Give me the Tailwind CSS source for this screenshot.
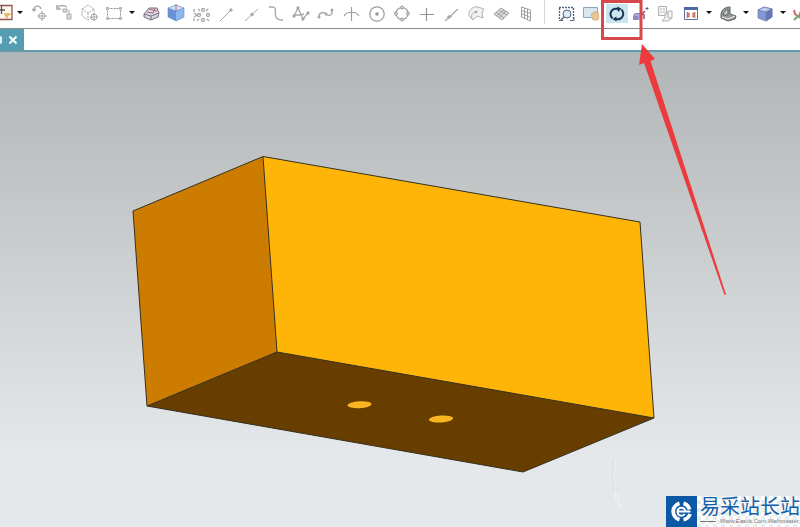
<!DOCTYPE html>
<html lang="zh">
<head>
<meta charset="utf-8">
<title>CAD</title>
<script src="https://cdn.jsdelivr.net/npm/@tailwindcss/browser@4"></script>
</head>
<body class="relative flex h-screen flex-col overflow-hidden bg-white font-['Liberation_Sans','Noto_Sans_CJK_SC',sans-serif]">
<svg class="hidden"><defs>
  <symbol id="caret" viewBox="0 0 12 24"><path d="M3 11h6l-3 3z" fill="#111"/></symbol>
</defs></svg>

<header class="flex h-[29px] shrink-0 items-center overflow-hidden border-b border-[#8c8c8e] pb-1 text-[#a8a8aa]">
  <button aria-label="Selection filter" class="-ml-[9px] flex w-[23px] shrink-0 justify-center"><svg class="h-6 w-6 shrink-0" viewBox="0 0 24 24" fill="none"><path d="M4 5.500h17v14H4z" fill="#fff6ee" stroke="#915452" stroke-width="1.300"/><path d="M7 10h7M10.500 6v8" stroke="#555" stroke-width="1.300"/><path d="M13 14h6l-3 2v3" fill="#e9b95b" stroke="#e4b466" stroke-width="1.500"/></svg></button>
  <button aria-label="Filter options" class="w-3 shrink-0"><svg class="h-6 w-3" viewBox="0 0 12 24"><use href="#caret"/></svg></button>
  <button aria-label="Move point" class="flex w-[25px] shrink-0 justify-center"><svg class="h-6 w-6" viewBox="0 0 24 24" fill="none" stroke="currentColor"><path d="M7 11C6 5 13 5 14 9M5 9l2 2 2-2" stroke-width="1.300"/><circle cx="15" cy="16" r="3"/><path d="M10 16h10M15 11v10"/></svg></button>
  <button aria-label="Reorder" class="flex w-[25px] shrink-0 justify-center"><svg class="h-6 w-6" viewBox="0 0 24 24" fill="none" stroke="currentColor"><path d="M5 8c3-3 7-3 10-1M5 5v4h4" stroke-width="1.500"/><path d="M11 9h4v3h-4zM15 14h4v5h-4zM17 10v4" fill="#ddd"/></svg></button>
  <button aria-label="Select body" class="flex w-[25px] shrink-0 justify-center"><svg class="h-6 w-6" viewBox="0 0 24 24" fill="none" stroke="currentColor"><path d="M5 9l6-4 6 4v7l-6 4-6-4zM5 9l6 4 6-4M11 13v7" stroke-dasharray="2 1"/><circle cx="17" cy="17" r="3" fill="#fff"/><path d="M13 17h8M17 13v8"/></svg></button>
  <button aria-label="Rectangle select" class="flex w-[25px] shrink-0 justify-center"><svg class="h-6 w-6" viewBox="0 0 24 24" fill="none" stroke="#8c8c8e"><path d="M5.500 8.500h13v10h-13z" stroke-dasharray="2 1"/><path d="M4 7h3v3H4zM17 7h3v3h-3zM4 17h3v3H4zM17 17h3v3h-3z" fill="#bbb" stroke="none"/></svg></button>
  <button aria-label="Rectangle select options" class="w-3 shrink-0"><svg class="h-6 w-3" viewBox="0 0 12 24"><use href="#caret"/></svg></button>
  <button aria-label="Highlight body" class="flex w-[25px] shrink-0 justify-center"><svg class="h-6 w-6" viewBox="0 0 24 24" stroke="#74717c"><path d="M5 14l5-6h8l2 5-1 4-7 3-7-3z" fill="#d8d8e2"/><path d="M5 14l7 2 8-3M12 16v4" fill="none"/><path d="M8 12l6 1 2-5M10 9l8 2" fill="none" stroke="#b36577"/></svg></button>
  <button aria-label="Solid body" class="flex w-[25px] shrink-0 justify-center"><svg class="h-6 w-6" viewBox="0 0 24 24"><path d="M4 8l8-3 8 3v9l-8 4-8-4z" fill="#6892d8"/><path d="M4 8l8-3 8 3-8 3z" fill="#cfe3f8"/><path d="M12 11l8-3v9l-8 4z" fill="#8db6ec"/><path d="M4 8l8 3 8-3M4 8v9l8 4 8-4V8l-8-3z" stroke="#6f8fc8" stroke-width=".6" fill="none"/><path d="M12 4v7" stroke="#b76b75"/></svg></button>
  <button aria-label="Snap point" class="flex w-[25px] shrink-0 justify-center"><svg class="h-6 w-6" viewBox="0 0 24 24" fill="none" stroke="currentColor" stroke-width="1.300"><path d="M5 9v3M5 18v3M5 13l3 2-3 2"/><circle cx="14" cy="10" r="1.500"/><circle cx="10" cy="15" r="1.500"/><circle cx="19" cy="15" r="1.500"/><circle cx="14" cy="20" r="1.500"/><path d="M9 9l2 2M19 9l-2 2M18 19l2 2M10 19l-2 2"/></svg></button>
  <button aria-label="End point" class="flex w-[25px] shrink-0 justify-center"><svg class="h-6 w-6" viewBox="0 0 24 24" stroke="currentColor"><path d="M6 21L17 10"/><circle cx="17" cy="10" r="1.200" fill="currentColor"/></svg></button>
  <button aria-label="Mid point" class="flex w-[25px] shrink-0 justify-center"><svg class="h-6 w-6" viewBox="0 0 24 24" stroke="currentColor"><path d="M6 21L19 9"/><circle cx="13" cy="14.500" r="1.300" fill="currentColor"/></svg></button>
  <button aria-label="Control point" class="flex w-[25px] shrink-0 justify-center"><svg class="h-6 w-6" viewBox="0 0 24 24" fill="none" stroke="currentColor" stroke-width="1.300"><path d="M5 7h3c6 0 2 6 4 10 1 3 4 3 7 3"/></svg></button>
  <button aria-label="Spline poles" class="flex w-[25px] shrink-0 justify-center"><svg class="h-6 w-6" viewBox="0 0 24 24" fill="none" stroke="currentColor" stroke-width="1.300"><path d="M5 16L9 8l5 11 5-6M5 15h6l4-1"/><g fill="currentColor"><circle cx="5" cy="16" r="1"/><circle cx="9" cy="8" r="1"/><circle cx="14" cy="19" r="1"/><circle cx="19" cy="13" r="1"/></g></svg></button>
  <button aria-label="Spline point" class="flex w-[25px] shrink-0 justify-center"><svg class="h-6 w-6" viewBox="0 0 24 24" fill="none" stroke="currentColor" stroke-width="1.400"><path d="M5 18c-1-5 4-7 7-4s7 1 6-4"/><g fill="currentColor"><circle cx="5" cy="17" r=".8"/><circle cx="12" cy="14" r=".8"/><circle cx="18" cy="10" r=".8"/></g></svg></button>
  <button aria-label="Intersection" class="flex w-[25px] shrink-0 justify-center"><svg class="h-6 w-6" viewBox="0 0 24 24" fill="none" stroke="#9e9ea0" stroke-width="1.200"><path d="M5 16c3-5 12-5 15 0M12.500 7v14"/></svg></button>
  <button aria-label="Arc center" class="flex w-[25px] shrink-0 justify-center"><svg class="h-6 w-6" viewBox="0 0 24 24" fill="none" stroke="#9a9a9c" stroke-width="1.200"><circle cx="13" cy="14" r="7.200"/><circle cx="13" cy="14" r="1.200" fill="#9a9a9c"/></svg></button>
  <button aria-label="Quadrant point" class="flex w-[25px] shrink-0 justify-center"><svg class="h-6 w-6" viewBox="0 0 24 24" fill="none" stroke="#a0a0a2" stroke-width="1.200"><circle cx="13" cy="13.500" r="6"/><g fill="#fff"><circle cx="13" cy="7.500" r="1.300"/><circle cx="13" cy="19.500" r="1.300"/><circle cx="7" cy="13.500" r="1.300"/><circle cx="19" cy="13.500" r="1.300"/></g></svg></button>
  <button aria-label="Existing point" class="flex w-[25px] shrink-0 justify-center"><svg class="h-6 w-6" viewBox="0 0 24 24" stroke="#969698" stroke-width="1.200"><path d="M6 14.500h14M12.500 8v13"/></svg></button>
  <button aria-label="Point on curve" class="flex w-[25px] shrink-0 justify-center"><svg class="h-6 w-6" viewBox="0 0 24 24" stroke="currentColor" stroke-width="1.200"><path d="M6 21L19 9M10 17l3-1"/><circle cx="10" cy="17" r="1.200" fill="currentColor"/></svg></button>
  <button aria-label="Point on face" class="flex w-[25px] shrink-0 justify-center"><svg class="h-6 w-6" viewBox="0 0 24 24" stroke="#b4b4b6"><path d="M5 16C4 10 9 6 14 7l6 2-2 4 1 5-6-2-4 4z" fill="#f1f1f1"/><path d="M9 20c-3-4-1-8 4-8" fill="none"/><circle cx="12" cy="12" r="1" fill="#777"/></svg></button>
  <button aria-label="Facet vertex" class="flex w-[25px] shrink-0 justify-center"><svg class="h-6 w-6" viewBox="0 0 24 24" stroke="#a0a0a2"><path d="M5 14l7-6 8 5-7 7z" fill="#ddd"/><path d="M7 12l8 6M10 10l8 5M7 16l8-6M10 18l7-7" fill="none"/></svg></button>
  <button aria-label="Grid point" class="flex w-[25px] shrink-0 justify-center"><svg class="h-6 w-6" viewBox="0 0 24 24" fill="none" stroke="#a0a0a2"><path d="M7.500 7l9 3v11l-9-4zM10.500 8v11M13.500 9v11M7.500 10.500l9 3M7.500 13.500l9 4"/></svg></button>
  <span class="mr-2 ml-1.5 h-6 w-px shrink-0 bg-[#d5d7da]"></span>
  <button aria-label="Fit view" class="flex w-[25px] shrink-0 justify-center"><svg class="h-6 w-6" viewBox="0 0 24 24" fill="none" stroke="#526181"><path d="M5 7.500h15M5.500 8v12M19.500 8v12" stroke-dasharray="2 1" stroke-width="1.300"/><circle cx="13" cy="14" r="4" fill="#d9ecf8"/><path d="M10 17l-3 3" stroke-width="1.500"/><path d="M5 20.500h4M16 20.500h4v-3"/></svg></button>
  <button aria-label="Pan" class="flex w-[25px] shrink-0 justify-center"><svg class="h-6 w-6" viewBox="0 0 24 24"><path d="M4.500 7.500h14v10h-14z" fill="#dae6ef" stroke="#8fa3ba"/><path d="M12 14l2 1v-3l2 1v-2l2 2 1-1 1 5-1 3h-5z" fill="#edc88e" stroke="#cba77b" stroke-width=".7"/></svg></button>
  <button aria-label="Rotate" aria-pressed="true" class="flex w-[25px] shrink-0 justify-center"><svg class="h-6 w-6" viewBox="0 0 24 24" fill="none"><path d="M2 4h22v19H2z" fill="#c9e5ef"/><path d="M8.500 18.500C4 13.500 8 7.500 14 9M17.500 9.500c4 5 .5 11-6 9.500" stroke="#1c3152" stroke-width="2"/><path d="M13 6.500l4.500 2L14 12zM12.500 16.500l-4 2.500 4 2.500z" fill="#1c3152"/></svg></button>
  <button aria-label="Perspective" class="flex w-[25px] shrink-0 justify-center"><svg class="h-6 w-6" viewBox="0 0 24 24"><path d="M4 15l2-2h6v5l-2 2H4z" fill="#8f88c4"/><path d="M4 15h6v5M10 15l2-2" stroke="#c5bfe2" fill="none"/><path d="M12 15l4-4M13 14l2 1v4" stroke="#8d5188" stroke-width="1.500" fill="none"/><path d="M18 7v3M16.500 8.500h3" stroke="#666"/></svg></button>
  <button aria-label="Section view" class="flex w-[25px] shrink-0 justify-center"><svg class="h-6 w-6" viewBox="0 0 24 24" stroke="#b0b0b0" fill="#f5f5f5"><path d="M4.500 6.500h8v9h-8z"/><path d="M6 9h2M9 9h2M6 12h2M9 12h2"/><path d="M11 14h3v-3h4v7l-4 3H8l3-3z"/><path d="M14 14v4h4" fill="none"/></svg></button>
  <button aria-label="Fit window" class="flex w-[25px] shrink-0 justify-center"><svg class="h-6 w-6" viewBox="0 0 24 24"><path d="M5.500 7.500h13v12h-13z" fill="#fff" stroke="#5a6fa6"/><path d="M5 7h14v3H5z" fill="#4b68a8"/><path d="M8 12l3 2-3 1zM16 12l-3 2 3 1zM8 18l3-2-3-1zM16 18l-3-2 3-1z" fill="#cd7062" stroke="#cd7062" stroke-width=".7"/></svg></button>
  <button aria-label="Fit window options" class="w-3 shrink-0"><svg class="h-6 w-3" viewBox="0 0 12 24"><use href="#caret"/></svg></button>
  <button aria-label="Edge display" class="flex w-[25px] shrink-0 justify-center"><svg class="h-6 w-6" viewBox="0 0 24 24" stroke="#5c5f61"><path d="M5 15c0-5 4-8 9-8v7l6 2-1 3-7 2-7-3z" fill="#999c9d"/><path d="M7 15c0-3 3-5 5-6v6z" fill="#ccc"/><path d="M6 17l6 2 7-3" fill="none" stroke="#eee"/></svg></button>
  <button aria-label="Edge display options" class="w-3 shrink-0"><svg class="h-6 w-3" viewBox="0 0 12 24"><use href="#caret"/></svg></button>
  <button aria-label="Shaded display" class="flex w-[25px] shrink-0 justify-center"><svg class="h-6 w-6" viewBox="0 0 24 24" stroke="#7480ad" stroke-width=".8"><path d="M5 10l6-3 8 2v8l-6 4-8-3z" fill="#8397d6"/><path d="M5 10l6-3 8 2-6 3z" fill="#bdcaf0"/><path d="M13 12l6-3v8l-6 4z" fill="#6576b4"/></svg></button>
  <button aria-label="Shaded display options" class="w-3 shrink-0"><svg class="h-6 w-3" viewBox="0 0 12 24"><use href="#caret"/></svg></button>
  <button aria-label="View orientation" class="flex w-[25px] shrink-0"><svg class="h-6 w-6" viewBox="0 0 24 24" fill="none" stroke-width="2"><path d="M5 10l1 4 4 3 2-6" stroke="#c76b70"/><path d="M5 20l4-4 3 1" stroke="#72a974"/></svg></button>
</header>

<nav class="flex h-[21px] shrink-0 bg-white">
  <div class="flex w-6 items-center justify-end bg-[#559eb2] pr-1.5">
    <span class="mr-1.5 h-2 w-1 rounded-r bg-[#d9f0f4]"></span>
    <button aria-label="Close tab"><svg class="h-3 w-2.5" viewBox="0 0 10 12"><path d="M1.500 2.500l7 7m0-7l-7 7" stroke="#fff" stroke-width="2"/></svg></button>
  </div>
</nav>

<main class="relative min-h-0 flex-1 border-t-2 border-[#6799aa] bg-linear-to-b from-[#b2b5b6] to-[#e4e8ea] to-85%">
  <div class="h-0.5 bg-[#a8b7ba]"></div>
  <svg class="absolute inset-0 h-full w-full" viewBox="0 52 800 475" stroke-linejoin="round" role="img" aria-label="Solid block with two holes">
    <path d="M133 211L263 156.500 277 352 147 406z" fill="#cc7c00"/>
    <path d="M263 156.500L640 222 654 418 277 352z" fill="#ffb507"/>
    <path d="M277 352L654 418 523 472 147 406z" fill="#673e00"/>
    <path d="M133 211L263 156.500 640 222 654 418 523 472 147 406zM263 156.500L277 352 147 406M277 352L654 418" fill="none" stroke="#35301f" stroke-width="1"/>
    <ellipse cx="359.500" cy="404.700" rx="12" ry="3.500" transform="rotate(-3 359.500 404.700)" fill="#fbb520"/>
    <ellipse cx="441" cy="419" rx="12" ry="3.500" transform="rotate(-3 441 419)" fill="#fbb520"/>
    <path d="M615 459c-2 15-2 27 1 42M618 493l1 13 3 2" fill="none" stroke="#eef1f2" stroke-width="1.500"/>
    <path d="M614 459c-2 15-1 26 0 34" fill="none" stroke="#d8dcde" stroke-width="1"/>
  </svg>
</main>

<svg class="pointer-events-none absolute inset-0 h-full w-full" viewBox="0 0 800 527" aria-hidden="true">
  <path d="M602.500 1.500h38.500v37h-38.500z" fill="none" stroke="#d7474b" stroke-width="3"/>
  <path d="M642 44L655 59 650.500 61 726 294.500 724.500 295 644 63 639 65z" fill="#eb3b3c"/>
</svg>

<a href="#" class="absolute right-0 bottom-0 flex h-[31px] w-[134px] items-stretch overflow-hidden">
  <svg class="h-[31px] w-[31px] shrink-0" viewBox="0 0 31 31" fill="none"><path d="M0 0h31v31H0z" fill="#0b58a6"/><path d="M13.500 7.300a8.500 8.500 0 0 0 0 16.400M17.500 7.300a8.500 8.500 0 0 1 6 6.200M24 18a8.500 8.500 0 0 1-6.500 5.700" stroke="#fff" stroke-width="3.800"/><path d="M11.500 15.500h13M19.300 15.500c-.5-5-7.800-5-7.800 0s5.500 5 7.300 2.500" stroke="#fff" stroke-width="2"/></svg>
  <span class="flex flex-1 flex-col bg-[repeating-conic-gradient(#e9edef_0_25%,#ffffff_0_50%)] bg-size-[8px_8px] pl-[3px]">
    <span class="text-[20px] leading-[22px] font-normal whitespace-nowrap text-[#155fa8]">易采站长站</span>
    <span class="flex items-center gap-1 text-[6px] leading-[7px] whitespace-nowrap text-[#777]"><span class="h-px w-4 shrink-0 bg-[#777]"></span>Www.Easck.Com Webmaster</span>
  </span>
</a>
</body>
</html>
